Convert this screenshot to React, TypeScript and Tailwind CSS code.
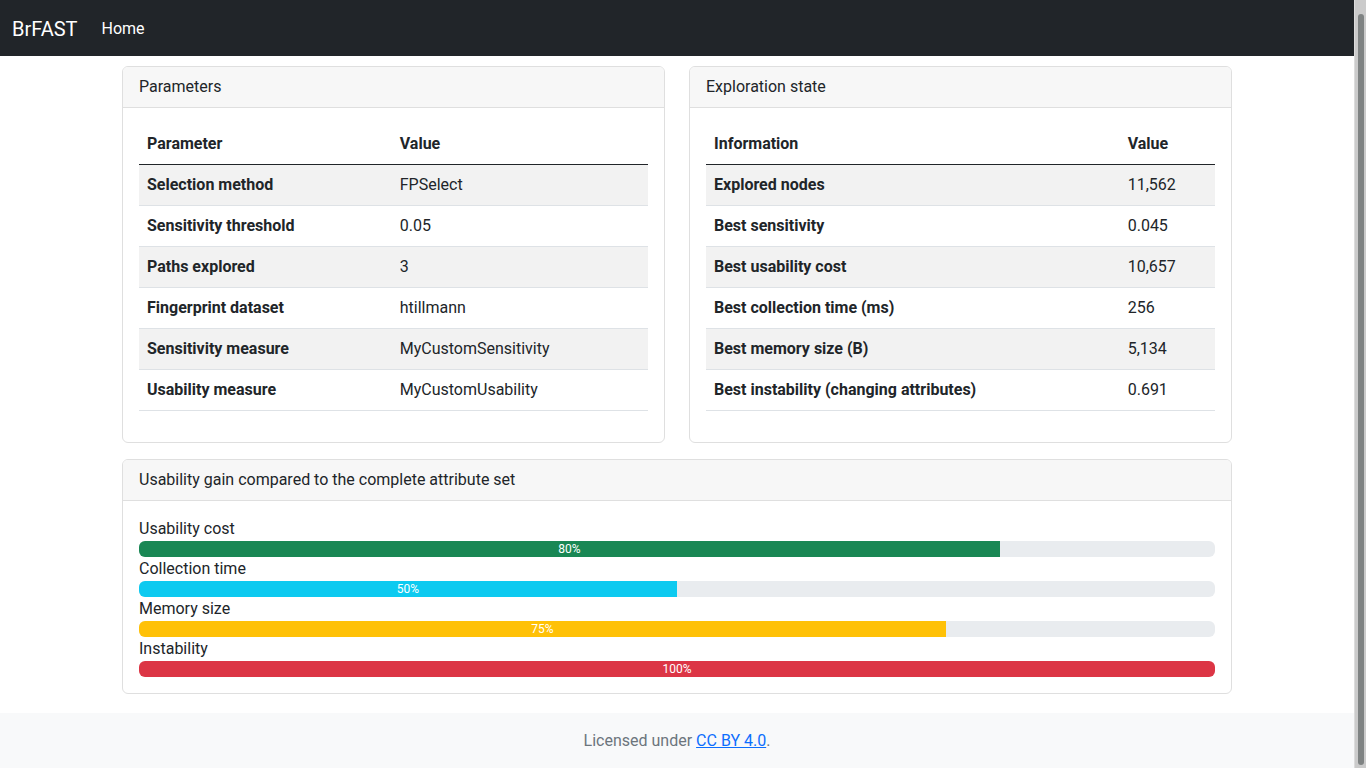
import React from "react";

const params: [string, string][] = [
  ["Selection method", "FPSelect"],
  ["Sensitivity threshold", "0.05"],
  ["Paths explored", "3"],
  ["Fingerprint dataset", "htillmann"],
  ["Sensitivity measure", "MyCustomSensitivity"],
  ["Usability measure", "MyCustomUsability"],
];

const state: [string, string][] = [
  ["Explored nodes", "11,562"],
  ["Best sensitivity", "0.045"],
  ["Best usability cost", "10,657"],
  ["Best collection time (ms)", "256"],
  ["Best memory size (B)", "5,134"],
  ["Best instability (changing attributes)", "0.691"],
];

function Card({ title, children }: { title: string; children: React.ReactNode }) {
  return (
    <div className="border border-[#dfdfdf] rounded-[6px] bg-white overflow-hidden">
      <div className="bg-[#f7f7f7] border-b border-[#dfdfdf] px-4 py-2 leading-6 text-[#212529]">{title}</div>
      <div className="p-4">{children}</div>
    </div>
  );
}

function Table({ head, rows }: { head: [string, string]; rows: [string, string][] }) {
  return (
    <table className="w-full mb-[15px] border-collapse text-[#212529]">
      <thead>
        <tr className="border-b border-[#212529]">
          <th className="text-left font-bold px-2 py-2 leading-6">{head[0]}</th>
          <th className="text-left font-bold px-2 py-2 leading-6">{head[1]}</th>
        </tr>
      </thead>
      <tbody>
        {rows.map(([a, b], i) => (
          <tr key={a} className={`border-b border-[#dee2e6] ${i % 2 === 0 ? "bg-[#f2f2f2]" : "bg-white"}`}>
            <th className="text-left font-bold px-2 py-2 leading-6">{a}</th>
            <td className="px-2 py-2 leading-6">{b}</td>
          </tr>
        ))}
      </tbody>
    </table>
  );
}

const bars = [
  { label: "Usability cost", pct: 80, cls: "bg-[#198754]" },
  { label: "Collection time", pct: 50, cls: "bg-[#0dcaf0]" },
  { label: "Memory size", pct: 75, cls: "bg-[#ffc107]" },
  { label: "Instability", pct: 100, cls: "bg-[#dc3545]" },
];

export default function App() {
  return (
    <div className="min-h-screen bg-white text-[#212529] text-base pr-[12px]" style={{ fontFamily: "Roboto, 'Liberation Sans', sans-serif" }}>
      <nav className="bg-[#212529] h-14 flex items-center px-3 pt-px">
        <span className="text-white text-xl leading-[30px] mr-4">BrFAST</span>
        <span className="text-white px-2 leading-6">Home</span>
      </nav>
      <main className="w-[1110px] mx-auto pt-[10px] pb-[19px]">
        <div className="grid grid-cols-2 gap-6">
          <Card title="Parameters">
            <Table head={["Parameter", "Value"]} rows={params} />
          </Card>
          <Card title="Exploration state">
            <Table head={["Information", "Value"]} rows={state} />
          </Card>
        </div>
        <div className="mt-4">
          <Card title="Usability gain compared to the complete attribute set">
            <div className="flex flex-col">
              {bars.map((b) => (
                <div key={b.label}>
                  <div className="leading-6">{b.label}</div>
                  <div className="h-4 bg-[#e9ecef] rounded-[6px] overflow-hidden flex">
                    <div
                      className={`${b.cls} h-full flex items-center justify-center text-white text-xs leading-none`}
                      style={{ width: `${b.pct}%` }}
                    >
                      {b.pct}%
                    </div>
                  </div>
                </div>
              ))}
            </div>
          </Card>
        </div>
      </main>
      <footer className="bg-[#f8f9fa] pt-4 pb-10 text-center text-[#6c757d] leading-6">
        Licensed under{" "}
        <a href="#" className="text-[#0d6efd] underline">
          CC BY 4.0
        </a>
        .
      </footer>
      <div className="fixed top-0 right-0 h-screen w-[12px] bg-[#cbcbcb] border-l border-[#dcdcdc] pt-[14px] pb-[3px] flex justify-center">
        <div className="w-[6px] h-full bg-[#7f8383] rounded-[3px]" />
      </div>
    </div>
  );
}
